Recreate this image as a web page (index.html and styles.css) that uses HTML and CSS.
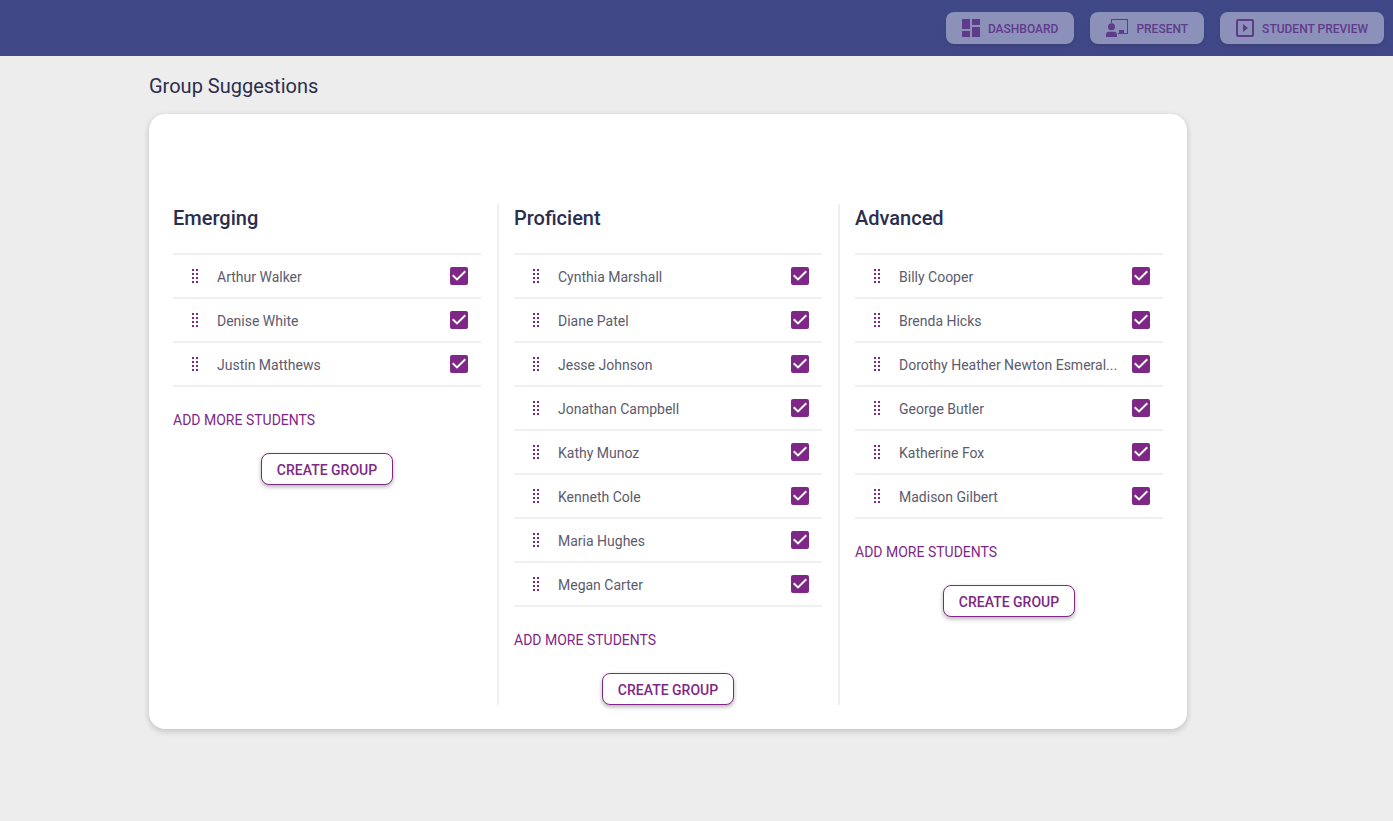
FILE: index.html
```html
<!DOCTYPE html>
<html lang="en">
<head>
<meta charset="utf-8">
<meta name="viewport" content="width=device-width, initial-scale=1">
<title>Group Suggestions</title>
<link rel="stylesheet" href="styles.css">
</head>
<body>
<header class="topbar">
  <button class="nav-button" type="button">
    <svg class="nav-icon" viewBox="0 0 18 18" width="18" height="18" aria-hidden="true"><path d="M0 0h8v10H0zM10 0h8v6h-8zM0 12h8v6H0zM10 8h8v10h-8z"/></svg>
    <span class="nav-label">Dashboard</span>
  </button>
  <button class="nav-button" type="button">
    <svg class="nav-icon" viewBox="0 0 22 18" width="22" height="18" aria-hidden="true"><path d="M5 0h17v15H12v-1h1v-3h5v3h3V1H6v3H5z"/><circle cx="5.5" cy="7.8" r="3.5"/><path d="M0 18v-2Q0 12.700 3 12.700h5Q11 12.700 11 16v2z"/></svg>
    <span class="nav-label">Present</span>
  </button>
  <button class="nav-button" type="button">
    <svg class="nav-icon" viewBox="0 0 18 18" width="18" height="18" aria-hidden="true"><rect class="nav-frame" x="1" y="1" width="16" height="16" rx="1"/><path d="M7 5l5 4-5 4z"/></svg>
    <span class="nav-label">Student Preview</span>
  </button>
</header>
<main class="page">
  <h1 class="page-title">Group Suggestions</h1>
  <div class="card" id="groups"></div>
</main>
<script src="groups.js"></script>
</body>
</html>
```

FILE: styles.css
```css
* {
  box-sizing: border-box;
}

body {
  margin: 0;
  min-height: 100vh;
  background: #ededed;
  color: #2b2d4f;
  font-family: Roboto, "Liberation Sans", sans-serif;
}

button {
  font-family: inherit;
  cursor: pointer;
}

.topbar {
  display: flex;
  align-items: center;
  justify-content: flex-end;
  gap: 16px;
  height: 56px;
  padding: 0 9px;
  background: #404887;
}

.nav-button {
  display: flex;
  align-items: center;
  gap: 8px;
  height: 32px;
  padding: 0 16px;
  border: 0;
  border-radius: 8px;
  background: #8c91b9;
  box-shadow: 0 2px 4px rgba(0, 0, 0, 0.1);
  color: #5f3b8b;
  font-size: 12px;
  font-weight: 500;
  line-height: 16px;
  text-transform: uppercase;
}

.nav-label {
  padding-top: 2px;
}

.nav-icon {
  flex: none;
  fill: currentColor;
}

.nav-frame {
  fill: none;
  stroke: currentColor;
  stroke-width: 2;
}

.page {
  padding: 16px 206px 24px 149px;
}

.page-title {
  margin: 0 0 14px;
  font-size: 20px;
  font-weight: 400;
  line-height: 28px;
}

.card {
  display: flex;
  padding: 90px 24px 24px;
  border-radius: 16px;
  background: #fff;
  box-shadow: 0 2px 6px rgba(0, 0, 0, 0.2);
}

.group {
  display: flex;
  flex: 1 1 0;
  flex-direction: column;
  min-width: 0;
}

.group + .group {
  margin-left: 33px;
}

.group:not(:last-child) {
  position: relative;
}

.group:not(:last-child)::after {
  content: "";
  position: absolute;
  top: 0;
  right: -18px;
  bottom: 0;
  width: 2px;
  background: #efefef;
}

.group-title {
  margin: 0 0 21px;
  font-size: 20px;
  font-weight: 500;
  line-height: 28px;
}

.students {
  margin: 0;
  padding: 0;
  border-top: 2px solid #efefef;
  list-style: none;
}

.student {
  display: flex;
  align-items: center;
  height: 44px;
  padding: 0 13px 0 19px;
  border-bottom: 2px solid #efefef;
}

.handle {
  flex: none;
  height: 14px;
  margin-right: 19px;
  padding: 0;
  border: 0;
  background: none;
  cursor: grab;
}

.handle-dots {
  display: block;
  fill: #7f2787;
}

.student-name {
  flex: 1;
  min-width: 0;
  margin-right: 12px;
  overflow: hidden;
  padding-top: 2px;
  color: #5c5b6e;
  font-size: 14px;
  line-height: 20px;
  text-overflow: ellipsis;
  white-space: nowrap;
}

.tick {
  display: grid;
  flex: none;
  width: 18px;
  height: 18px;
}

.tick-input,
.tick-mark {
  grid-area: 1 / 1;
  width: 18px;
  height: 18px;
  margin: 0;
}

.tick-input {
  appearance: none;
  border: 2px solid #7f2787;
  border-radius: 2px;
  background: #fff;
}

.tick-input:checked {
  background: #7f2787;
}

.tick-mark {
  fill: none;
  stroke: #fff;
  stroke-width: 2;
  pointer-events: none;
}

.add-link {
  align-self: flex-start;
  margin: 23px 0;
  color: #7f2787;
  font-size: 14px;
  line-height: 20px;
  text-decoration: none;
  text-transform: uppercase;
}

.create-button {
  align-self: center;
  height: 32px;
  padding: 2px 15px 0;
  border: 1px solid #7f2787;
  border-radius: 8px;
  background: #fff;
  box-shadow: 0 2px 4px rgba(0, 0, 0, 0.3);
  color: #7f2787;
  font-size: 14px;
  font-weight: 500;
  line-height: 20px;
  text-transform: uppercase;
}
```

FILE: groups.js
```js
const groups = [
  { title: "Emerging", students: ["Arthur Walker", "Denise White", "Justin Matthews"] },
  { title: "Proficient", students: ["Cynthia Marshall", "Diane Patel", "Jesse Johnson", "Jonathan Campbell", "Kathy Munoz", "Kenneth Cole", "Maria Hughes", "Megan Carter"] },
  { title: "Advanced", students: ["Billy Cooper", "Brenda Hicks", "Dorothy Heather Newton Esmeral...", "George Butler", "Katherine Fox", "Madison Gilbert"] }
];

const dots = [0, 4, 8, 12].map((y) => `M0 ${y}h2v2H0zM4 ${y}h2v2H4z`).join("");

const studentRow = (name, id) => `
  <li class="student">
    <button class="handle" type="button" aria-label="Move ${name}">
      <svg class="handle-dots" viewBox="0 0 6 14" width="6" height="14" aria-hidden="true"><path d="${dots}"/></svg>
    </button>
    <label class="student-name" for="${id}">${name}</label>
    <span class="tick">
      <input class="tick-input" type="checkbox" id="${id}" checked>
      <svg class="tick-mark" viewBox="0 0 18 18" aria-hidden="true"><path d="M2.700 8.300L7 12.400L15.300 4.300"/></svg>
    </span>
  </li>`;

document.getElementById("groups").innerHTML = groups.map((group, g) => `
  <section class="group">
    <h2 class="group-title">${group.title}</h2>
    <ul class="students">${group.students.map((name, s) => studentRow(name, `student-${g}-${s}`)).join("")}</ul>
    <a class="add-link" href="#">Add more students</a>
    <button class="create-button" type="button">Create group</button>
  </section>`).join("");
```
